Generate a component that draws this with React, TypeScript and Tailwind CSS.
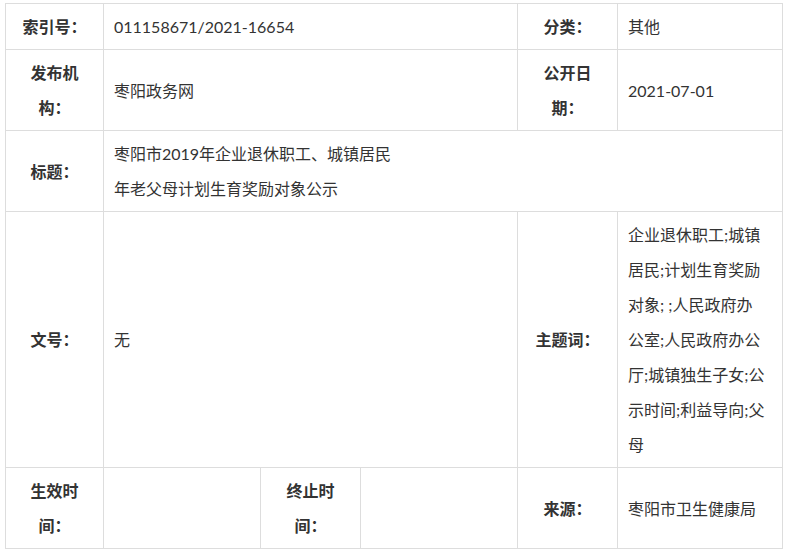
export default function App() {
  const cell = "border border-[#dddddd] px-[10px] py-[5px] align-middle";
  const label = `${cell} text-center font-bold`;

  // 主题词は元の表示どおりの位置で折り返す
  const keywords = [
    "企业退休职工;城镇",
    "居民;计划生育奖励",
    "对象; ;人民政府办",
    "公室;人民政府办公",
    "厅;城镇独生子女;公",
    "示时间;利益导向;父",
    "母",
  ];

  return (
    <div
      className="min-h-screen bg-white pl-[5px] pt-[3px] text-[16px] leading-[35px] text-[#333333]"
      style={{ fontFamily: 'Lato, "Noto Sans CJK SC", sans-serif' }}
    >
      <table className="w-[777px] table-fixed border-collapse">
        <colgroup>
          <col className="w-[98px]" />
          <col className="w-[157px]" />
          <col className="w-[100px]" />
          <col className="w-[157px]" />
          <col className="w-[100px]" />
          <col className="w-[165px]" />
        </colgroup>
        <tbody>
          <tr>
            <td className={label}>索引号：</td>
            <td className={cell} colSpan={3}>
              011158671/2021-16654
            </td>
            <td className={label}>分类：</td>
            <td className={cell}>其他</td>
          </tr>
          <tr>
            <td className={label}>发布机构：</td>
            <td className={cell} colSpan={3}>
              枣阳政务网
            </td>
            <td className={label}>公开日期：</td>
            <td className={cell}>2021-07-01</td>
          </tr>
          <tr>
            <td className={label}>标题：</td>
            <td className={cell} colSpan={5}>
              枣阳市2019年企业退休职工、城镇居民
              <br />
              年老父母计划生育奖励对象公示
            </td>
          </tr>
          <tr>
            <td className={label}>文号：</td>
            <td className={cell} colSpan={3}>
              无
            </td>
            <td className={label}>主题词：</td>
            <td className={`${cell} whitespace-pre`}>
              {keywords.map((line, i) => (
                <div key={i}>{line}</div>
              ))}
            </td>
          </tr>
          <tr>
            <td className={label}>生效时间：</td>
            <td className={cell}></td>
            <td className={label}>终止时间：</td>
            <td className={cell}></td>
            <td className={label}>来源：</td>
            <td className={cell}>枣阳市卫生健康局</td>
          </tr>
        </tbody>
      </table>
    </div>
  );
}
